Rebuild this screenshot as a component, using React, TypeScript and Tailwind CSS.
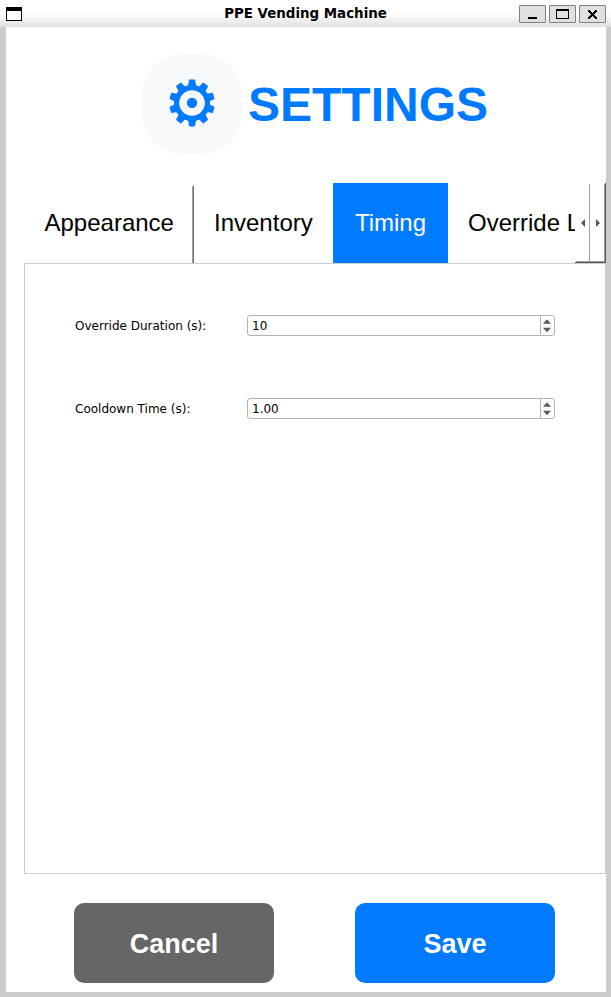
import React from "react";

const sans = "font-['Liberation_Sans',Arial,sans-serif]";

function WindowButton({ children }: { children: React.ReactNode }) {
  return (
    <button className="h-[18px] w-[27px] rounded-[1px] border border-[#808080] bg-[#e0e0e0]">
      <svg width="25" height="16" viewBox="0 0 25 16" shapeRendering="crispEdges">
        {children}
      </svg>
    </button>
  );
}

function TitleBar() {
  return (
    <header className="grid h-[27px] grid-cols-[1fr_auto_1fr] items-start bg-linear-to-b from-white from-50% to-[#e0e0e0]">
      <div className="pt-[7px] pl-1.5">
        <div className="h-3.5 w-4 border border-t-4 border-black bg-white" />
      </div>
      <h1 className="pt-1.5 text-[13.4px] leading-4 font-bold whitespace-nowrap text-black">
        PPE Vending Machine
      </h1>
      <div className="flex justify-end gap-[3px] pt-[5px] pr-[5px]">
        <WindowButton>
          <rect x="8" y="11" width="9" height="2" />
        </WindowButton>
        <WindowButton>
          <path d="M6 3h13v10H6zM7 5v7h11V5z" fillRule="evenodd" />
        </WindowButton>
        <WindowButton>
          <path d="M8 4h2v1h1v1h1v1h1V6h1V5h1V4h2v2h-1v1h-1v1h-1v1h1v1h1v1h1v2h-2v-1h-1v-1h-1v-1h-1v1h-1v1h-1v1H8v-2h1v-1h1V9h1V8h-1V7H9V6H8z" />
        </WindowButton>
      </div>
    </header>
  );
}

function SpinField({ label, value }: { label: string; value: string }) {
  return (
    <div className="flex h-[21px] items-center">
      <label className="w-[172px] text-xs whitespace-nowrap text-black">{label}</label>
      <div className="flex h-[21px] w-[308px] rounded-[3px] border border-[#b4b4b4] bg-white">
        <span className="flex-1 pt-px pl-1 text-xs leading-[19px] text-black">{value}</span>
        <span className="w-3.5 border-l border-[#b4b4b4]">
          <svg width="13" height="19" viewBox="0 0 13 19" fill="#5a5a5a">
            <path d="M2 7.700 5.500 3.700h1L10 7.700zM2 11.700h8l-3.500 4h-1z" />
          </svg>
        </span>
      </div>
    </div>
  );
}

function Tabs() {
  return (
    <nav className={`flex h-20 pl-[18px] text-2xl whitespace-nowrap text-black ${sans}`}>
      <div className="flex w-[170px] flex-col pt-[3px]">
        <div className="flex flex-1 border-r border-[#707070]">
          <div className="flex flex-1 items-center border-r border-[#a0a0a0] pb-[3px] pl-[20.5px]">Appearance</div>
        </div>
      </div>
      <div className="flex w-[139px] items-center pl-5">Inventory</div>
      <div className="flex w-[115px] items-center justify-center bg-[#007bff] text-white">Timing</div>
      <div className="flex w-[127px] items-center overflow-hidden pl-5">Override L</div>
      <svg width="31" height="80" viewBox="0 0 31 80" shapeRendering="crispEdges">
        <path d="M14 1h1v78h-1zM1 78h29v1H1zM29 1h1v78h-1z" fill="#a0a0a0" />
        <path d="M0 79h31V0h-1v79z" fill="#555" />
        <path d="M0 79h31v1H0z" fill="#555" />
        <path d="M10 36v8l-4-4zM21 36v8l4-4z" fill="#555" shapeRendering="auto" />
      </svg>
    </nav>
  );
}

export default function App() {
  return (
    <div className="flex h-[997px] w-[611px] flex-col overflow-hidden bg-[#ccc] font-['DejaVu_Sans',sans-serif]">
      <TitleBar />
      <main className="mr-[5px] mb-[5px] ml-1.5 flex flex-1 flex-col bg-white">
        <div className="flex h-[156px] items-start gap-1.5 pt-[27px] pl-[136px] text-[#007bff]">
          <div className="flex size-[100px] items-center justify-center rounded-[40px] bg-[#f8f9fa] text-[62px] leading-[100px] [-webkit-text-stroke:1px_#007bff]">
            ⚙
          </div>
          <h2 className={`pt-px text-[48px] leading-[100px] font-bold ${sans}`}>SETTINGS</h2>
        </div>
        <Tabs />
        <section className="ml-[18px] flex h-[611px] flex-col gap-[62px] border border-[#ccc] pt-[51px] pl-[50px]">
          <SpinField label="Override Duration (s):" value="10" />
          <SpinField label="Cooldown Time (s):" value="1.00" />
        </section>
        <div className={`flex gap-[81px] pt-[29px] pl-[68px] text-[27px] font-bold text-white ${sans}`}>
          <button className="h-20 w-[200px] rounded-[10px] bg-[#666] pt-0.5">Cancel</button>
          <button className="h-20 w-[200px] rounded-[10px] bg-[#007bff] pt-0.5">Save</button>
        </div>
      </main>
    </div>
  );
}
